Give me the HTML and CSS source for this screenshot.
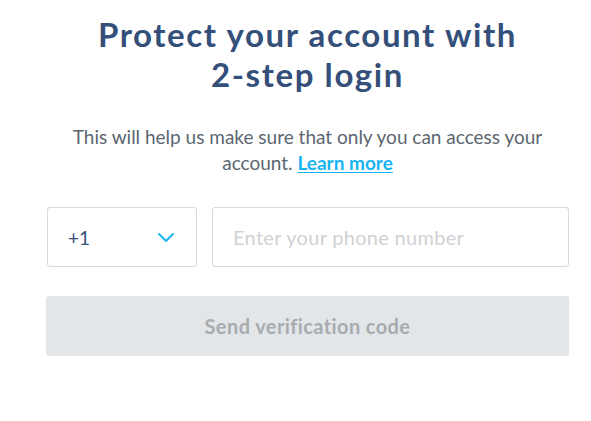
FILE: index.html
```html
<!DOCTYPE html>
<html lang="en">
<head>
    <meta charset="UTF-8">
    <meta name="viewport" content="width=device-width, initial-scale=1.0">
    <title>2-step login</title>
    <link rel="stylesheet" href="styles.css">
</head>
<body>
    <div class="twostep">
        <h1 class="twostep-title">Protect your account with<br>2-step login</h1>
        <p class="twostep-text">This will help us make sure that only you can access your account. <a href="#" class="twostep-link">Learn more</a></p>
        <div class="phone-row">
            <div class="country-select">
                <span class="country-code">+1</span>
                <svg class="chevron" width="16" height="9" viewBox="0 0 16 9" fill="none">
                    <path d="M1 1l7 7 7-7" stroke="#1fb6f0" stroke-width="2" stroke-linecap="round" stroke-linejoin="round"/>
                </svg>
            </div>
            <input class="phone-input" type="text" placeholder="Enter your phone number">
        </div>
        <button class="send-btn" disabled>Send verification code</button>
    </div>
</body>
</html>
```

FILE: styles.css
```css
* {
    margin: 0;
    padding: 0;
    box-sizing: border-box;
}

body {
    background: #fff;
    font-family: 'Lato', 'Noto Sans', sans-serif;
}

.twostep {
    width: 523px;
    margin-left: 46px;
    padding-top: 14px;
    text-align: center;
}

.twostep-title {
    font-size: 33px;
    line-height: 40px;
    font-weight: 700;
    letter-spacing: 1.6px;
    color: #344f7a;
}

.twostep-text {
    margin-top: 30px;
    padding: 0 8px;
    font-size: 19px;
    line-height: 26px;
    color: #5b6670;
}

.twostep-link {
    color: #16b4f2;
    font-weight: 700;
    text-decoration: underline;
    text-underline-offset: 2px;
}

.phone-row {
    display: flex;
    gap: 15px;
    margin-top: 31px;
    margin-left: 1px;
}

.country-select {
    width: 150px;
    height: 60px;
    border: 1px solid #d7dadd;
    border-radius: 3px;
    display: flex;
    align-items: center;
    justify-content: space-between;
    padding: 0 22px 0 20px;
}

.country-code {
    font-size: 19px;
    color: #344f7a;
}

.phone-input {
    flex: 1;
    min-width: 0;
    height: 60px;
    border: 1px solid #d7dadd;
    border-radius: 3px;
    padding: 0 20px;
    font-family: inherit;
    font-size: 20px;
    letter-spacing: 0.3px;
    color: #344f7a;
    outline: none;
}

.phone-input::placeholder {
    color: #cfd2d5;
}

.send-btn {
    display: block;
    width: 100%;
    height: 60px;
    margin-top: 29px;
    border: none;
    border-radius: 3px;
    background: #e2e6e9;
    font-family: inherit;
    font-size: 20px;
    font-weight: 700;
    letter-spacing: 0.4px;
    color: #a8abae;
}
```
